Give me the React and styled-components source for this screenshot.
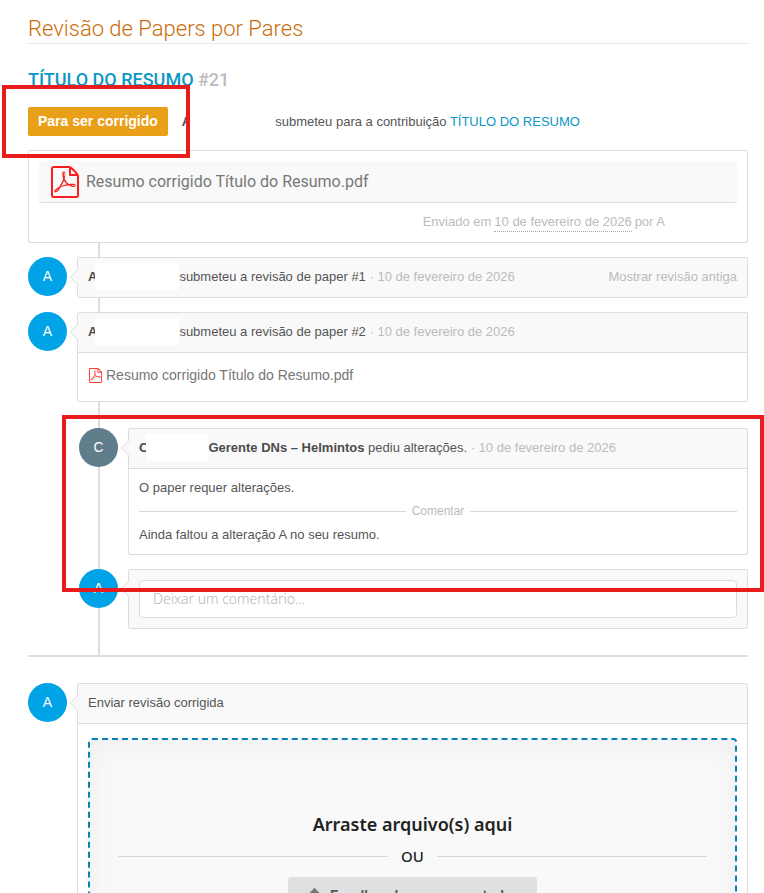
import React from 'react';
import styled, { createGlobalStyle } from 'styled-components';
import { FaUpload } from 'react-icons/fa';
import { ImFilePdf } from 'react-icons/im';

const GlobalStyle = createGlobalStyle`
  * {
    box-sizing: border-box;
  }

  body {
    margin: 0;
    background: #fff;
    color: #555;
    font-family: 'Liberation Sans', Arial, sans-serif;
    font-size: 13px;
    line-height: 20px;
  }
`;

const Page = styled.main`
  position: relative;
  padding: 14px 16px 20px 28px;
`;

const PageTitle = styled.h1`
  margin: 0 0 22px;
  border-bottom: 1px solid #e8e8e8;
  color: #cb6d0b;
  font-family: Roboto, sans-serif;
  font-size: 22px;
  font-weight: 300;
  line-height: 29px;
`;

const PaperTitle = styled.h2`
  margin: 0 0 13px;
  color: #bbb;
  font-family: Roboto, sans-serif;
  font-size: 18px;
  font-weight: 500;
  line-height: 28px;
`;

const TitleLink = styled.a`
  color: #0b97c7;
  text-decoration: none;
`;

const StatusRow = styled.div`
  display: flex;
  align-items: center;
  margin-bottom: 14px;
`;

const StatusTag = styled.span`
  margin-right: 14px;
  padding: 0 10px;
  border-radius: 2px;
  background: #e99f18;
  color: #fff;
  font-size: 14px;
  font-weight: bold;
  line-height: 29px;
`;

const Name = styled.strong`
  color: #4c4c4c;
`;

const Blank = styled.span`
  flex: none;
  width: ${props => props.$width}px;
  height: 27px;
  margin-left: -2px;
  background: #fff;
`;

const Box = styled.section`
  position: relative;
  flex: 1;
  min-width: 0;
  border: 1px solid #ddd;
  border-radius: 2px;
  background: #fff;
`;

const PaperBox = styled(Box)`
  padding: 10px;
`;

const FileBar = styled.a`
  display: flex;
  align-items: center;
  gap: 5px;
  height: 42px;
  padding: 0 10px;
  border-bottom: 1px solid #ddd;
  border-radius: 2px;
  background: #f9f9f9;
  color: #777;
  font-family: Roboto, sans-serif;
  font-size: 16px;
  text-decoration: none;

  svg {
    color: #fb1d1d;
  }
`;

const Submitted = styled.div`
  display: flex;
  gap: 3px;
  justify-content: flex-end;
  padding: 9px 72px 0 0;
  color: #bbb;
  line-height: 19px;
`;

const DottedTime = styled.time`
  border-bottom: 1px dotted #aaa;
`;

const Timeline = styled.div`
  position: relative;
  display: flex;
  flex-direction: column;
  gap: 14px;
  padding: 14px 0 26px;
  border-bottom: 2px solid #ddd;

  &::before {
    content: '';
    position: absolute;
    top: 0;
    bottom: 0;
    left: 70px;
    width: 2px;
    background: #ddd;
  }
`;

const Thread = styled.div`
  display: flex;
  flex-direction: column;
  gap: 14px;
  margin-top: 12px;
  padding-left: 51px;
`;

const Entry = styled.article`
  position: relative;
  display: flex;
  align-items: flex-start;
  gap: 10px;
`;

const Avatar = styled.div`
  flex: none;
  width: 39px;
  height: 39px;
  border-radius: 50%;
  background: ${props => props.$color || '#00a3e6'};
  color: #fff;
  font-size: 14px;
  line-height: 39px;
  text-align: center;
`;

const EntryBox = styled(Box)`
  &::before {
    content: '';
    position: absolute;
    top: 13px;
    left: -6px;
    width: 11px;
    height: 11px;
    border: solid #e4e4e4;
    border-width: 0 0 1px 1px;
    background: #f9f9f9;
    transform: rotate(45deg);
  }
`;

const EntryHeader = styled.header`
  display: flex;
  align-items: center;
  height: 39px;
  padding: 0 10px 2px;
  background: #f9f9f9;
  color: #555;
  white-space: pre;
`;

const EntryBody = styled.div`
  padding: ${props => props.$padding || '12px 10px 16px'};
  border-top: 1px solid #ddd;
`;

const Muted = styled.time`
  color: #bbb;
`;

const ToggleButton = styled.button`
  margin-left: auto;
  padding: 0;
  border: 0;
  background: none;
  color: #bbb;
  font: inherit;
  cursor: pointer;
`;

const FileLink = styled.a`
  display: flex;
  align-items: center;
  gap: 3px;
  color: #777;
  font-size: 14px;
  text-decoration: none;

  svg {
    color: #fb3a2e;
  }
`;

const Paragraph = styled.p`
  margin: 0;
`;

const Divider = styled.div`
  display: flex;
  align-items: center;
  gap: ${props => props.$gap}px;

  &::before,
  &::after {
    content: '';
    flex: 1;
    height: 1px;
    background: #d8d8d8;
  }
`;

const CommentDivider = styled(Divider)`
  margin: 3px 0 4px;
  color: #bbb;
  font-size: 12px;
`;

const CommentForm = styled.form`
  padding: 10px;
  background: #f9f9f9;
`;

const CommentInput = styled.input`
  position: relative;
  display: block;
  width: 100%;
  height: 38px;
  padding: 0 13px 2px;
  border: 1px solid #ddd;
  border-radius: 4px;
  background: #fff;
  font-family: 'Noto Sans', sans-serif;
  font-size: 14px;
  font-weight: 300;

  &::placeholder {
    color: #b8b8b8;
    opacity: 1;
  }
`;

const Upload = styled.div`
  padding-top: 26px;
`;

const DropZone = styled.div`
  display: flex;
  flex-direction: column;
  align-items: center;
  padding: 72px 28px 60px;
  border: 2px dashed #0982b5;
  border-radius: 4px;
  background: #f9f9f9;
  box-shadow: inset 0 0 30px rgba(0, 0, 0, 0.05);
  color: #222;
  font-family: 'Noto Sans', sans-serif;
`;

const DropTitle = styled.div`
  font-size: 18px;
  font-weight: 600;
  line-height: 24px;
`;

const OrDivider = styled(Divider)`
  align-self: stretch;
  margin: 8px 0 9px;
  font-size: 15px;
  font-weight: 500;
  line-height: 24px;
`;

const ChooseButton = styled.button`
  display: flex;
  align-items: center;
  gap: 8px;
  height: 36px;
  padding: 0 19px;
  border: 0;
  border-radius: 3px;
  background: #dfe0e1;
  color: #555;
  font-family: Lato, 'Noto Sans', sans-serif;
  font-size: 15px;
  font-weight: bold;
  cursor: pointer;

  svg {
    color: #777;
  }
`;

const Highlight = styled.div`
  position: absolute;
  top: ${props => props.$top}px;
  right: ${props => props.$right};
  left: ${props => props.$left}px;
  width: ${props => props.$width};
  height: ${props => props.$height}px;
  border: 4px solid #e81c1c;
  pointer-events: none;
`;

const FILE_NAME = 'Resumo corrigido Título do Resumo.pdf';
const DATE = '10 de fevereiro de 2026';

const App = () => {
  return (
    <>
      <GlobalStyle />
      <Page>
        <PageTitle>Revisão de Papers por Pares</PageTitle>
        <PaperTitle>
          <TitleLink href="#resumo">TÍTULO DO RESUMO</TitleLink> #21
        </PaperTitle>

        <StatusRow>
          <StatusTag>Para ser corrigido</StatusTag>
          <Name>A</Name>
          <Blank $width={86} />
          <span>
            submeteu para a contribuição <TitleLink href="#resumo">TÍTULO DO RESUMO</TitleLink>
          </span>
        </StatusRow>

        <PaperBox>
          <FileBar href="#pdf">
            <ImFilePdf size={32} />
            {FILE_NAME}
          </FileBar>
          <Submitted>
            <span>Enviado em</span>
            <DottedTime>{DATE}</DottedTime>
            <span>por A</span>
          </Submitted>
        </PaperBox>

        <Timeline>
          <Entry>
            <Avatar>A</Avatar>
            <EntryBox>
              <EntryHeader>
                <Name>A</Name>
                <Blank $width={84} />
                <span>submeteu a revisão de paper #1</span>
                <Muted> · {DATE}</Muted>
                <ToggleButton type="button">Mostrar revisão antiga</ToggleButton>
              </EntryHeader>
            </EntryBox>
          </Entry>

          <Entry>
            <Avatar>A</Avatar>
            <EntryBox>
              <EntryHeader>
                <Name>A</Name>
                <Blank $width={84} />
                <span>submeteu a revisão de paper #2</span>
                <Muted> · {DATE}</Muted>
              </EntryHeader>
              <EntryBody>
                <FileLink href="#pdf">
                  <ImFilePdf size={15} />
                  {FILE_NAME}
                </FileLink>
              </EntryBody>
            </EntryBox>
          </Entry>

          <Thread>
            <Entry>
              <Avatar $color="#607d8b">C</Avatar>
              <EntryBox>
                <EntryHeader>
                  <Name>C</Name>
                  <Blank $width={62} />
                  <Name>Gerente DNs – Helmintos</Name>
                  <span> pediu alterações.</span>
                  <Muted> · {DATE}</Muted>
                </EntryHeader>
                <EntryBody $padding="9px 10px">
                  <Paragraph>O paper requer alterações.</Paragraph>
                  <CommentDivider $gap={6}>Comentar</CommentDivider>
                  <Paragraph>Ainda faltou a alteração A no seu resumo.</Paragraph>
                </EntryBody>
              </EntryBox>
            </Entry>

            <Entry>
              <Avatar>A</Avatar>
              <EntryBox>
                <CommentForm>
                  <CommentInput
                    type="text"
                    aria-label="Comentário"
                    placeholder="Deixar um comentário..."
                  />
                </CommentForm>
              </EntryBox>
            </Entry>
          </Thread>
        </Timeline>

        <Upload>
          <Entry>
            <Avatar>A</Avatar>
            <EntryBox>
              <EntryHeader>Enviar revisão corrigida</EntryHeader>
              <EntryBody $padding="14px 10px">
                <DropZone>
                  <DropTitle>Arraste arquivo(s) aqui</DropTitle>
                  <OrDivider $gap={13}>OU</OrDivider>
                  <ChooseButton type="button">
                    <FaUpload size={15} />
                    Escolher do seu computador
                  </ChooseButton>
                </DropZone>
              </EntryBody>
            </EntryBox>
          </Entry>
        </Upload>

        <Highlight $top={85} $left={2} $width="188px" $height={73} />
        <Highlight $top={415} $left={62} $right="0" $height={177} />
      </Page>
    </>
  );
};

export default App;
